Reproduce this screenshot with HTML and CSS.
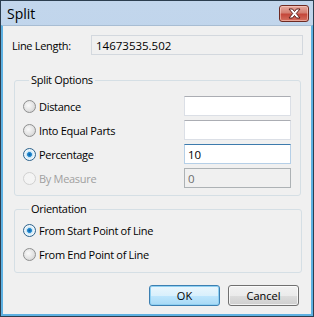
FILE: index.html
```html
<!DOCTYPE html>
<html lang="en">

<head>
    <meta charset="UTF-8">
    <title>Split</title>
    <link rel="stylesheet" href="styles.css">
</head>

<body>
    <div class="window">
        <div class="titlebar">
            <span class="title">Split</span>
            <button class="close-btn" type="button">
                <svg width="15" height="11" viewBox="0 0 15 11">
                    <path d="M2 1 L5.5 1 L7.5 3.5 L9.5 1 L13 1 L9.3 5.5 L13 10 L9.5 10 L7.5 7.5 L5.5 10 L2 10 L5.7 5.5 Z"
                        fill="#fff" stroke="#5a1f19" stroke-width="1" stroke-linejoin="round" />
                </svg>
            </button>
        </div>

        <div class="client">
            <div class="line-row">
                <span class="label">Line Length:</span>
                <div class="readonly-box">14673535.502</div>
            </div>

            <!-- Split Options -->
            <fieldset class="group split-options">
                <legend>Split Options</legend>
                <div class="opt-row">
                    <label class="radio"><span class="dot"></span>Distance</label>
                    <input type="text" class="field">
                </div>
                <div class="opt-row">
                    <label class="radio"><span class="dot"></span>Into Equal Parts</label>
                    <input type="text" class="field">
                </div>
                <div class="opt-row">
                    <label class="radio checked"><span class="dot"></span>Percentage</label>
                    <input type="text" class="field focused" value="10">
                </div>
                <div class="opt-row">
                    <label class="radio disabled"><span class="dot"></span>By Measure</label>
                    <input type="text" class="field disabled" value="0" disabled>
                </div>
            </fieldset>

            <!-- Orientation -->
            <fieldset class="group orientation">
                <legend>Orientation</legend>
                <div class="opt-row">
                    <label class="radio checked"><span class="dot"></span>From Start Point of Line</label>
                </div>
                <div class="opt-row">
                    <label class="radio"><span class="dot"></span>From End Point of Line</label>
                </div>
            </fieldset>

            <div class="buttons">
                <button type="button" class="btn default">OK</button>
                <button type="button" class="btn">Cancel</button>
            </div>
        </div>
    </div>
</body>

</html>
```
FILE: styles.css
```css
html,
body {
    margin: 0;
    padding: 0;
    background: #fff;
}

body {
    font-family: "Open Sans", "Liberation Sans", sans-serif;
    font-size: 11px;
    letter-spacing: -0.3px;
    color: #000;
}

.window {
    width: 314px;
    height: 317px;
    box-sizing: border-box;
    border: 1px solid #2c3e4f;
    background: linear-gradient(#c2d6ec, #b7cde7);
    display: flex;
    flex-direction: column;
}

.titlebar {
    height: 24px;
    display: flex;
    align-items: center;
    justify-content: space-between;
    padding: 0 4px 0 6px;
}

.title {
    font-size: 14px;
    letter-spacing: 0;
    color: #000;
}

.close-btn {
    width: 30px;
    height: 17px;
    margin-top: 1px;
    padding: 0;
    border: 1px solid #6e2a22;
    border-radius: 3px;
    background: linear-gradient(#e6a99e 0%, #d47f72 45%, #c4473a 55%, #d5705f 100%);
    box-shadow: inset 0 0 0 1px rgba(255, 220, 210, 0.5);
    display: flex;
    align-items: center;
    justify-content: center;
}

.client {
    flex: 1;
    background: #f0f0f0;
    border: 2px solid #5eb1e2;
    border-top: 1px solid #a8bdd3;
    padding: 9px 8px 0 9px;
    display: flex;
    flex-direction: column;
}

.line-row {
    display: flex;
    align-items: center;
    height: 20px;
}

.line-row .label {
    width: 79px;
}

.readonly-box {
    flex: 1;
    height: 20px;
    box-sizing: border-box;
    border: 1px solid #d3d8de;
    background: #f0f0f0;
    padding: 2px 4px;
    line-height: 15px;
    font-size: 11.5px;
    letter-spacing: 0;
}

.group {
    margin: 0;
    border: 1px solid #d5dfe5;
    border-radius: 3px;
    padding: 0 9px 7px 8px;
}

.group legend {
    padding: 0 2px;
    margin-left: 6px;
    line-height: 16px;
}

.split-options {
    margin: 17px 2px 0 2px;
}

.orientation {
    margin: 5px 1px 0 2px;
    padding-bottom: 8px;
}

.opt-row {
    height: 20px;
    display: flex;
    align-items: center;
    justify-content: space-between;
    margin-top: 4px;
}

.split-options .opt-row:first-of-type {
    margin-top: 8px;
}

.orientation .opt-row:first-of-type {
    margin-top: 3px;
}

.radio {
    display: flex;
    align-items: center;
    gap: 3px;
}

.radio .dot {
    width: 11px;
    height: 11px;
    border-radius: 50%;
    border: 1px solid #8e8f8f;
    background: radial-gradient(circle at 40% 40%, #fafafa 0%, #e2e2e2 55%, #c9c9c9 100%);
    box-sizing: content-box;
}

.radio.checked .dot {
    border-color: #2c628b;
    background: radial-gradient(circle, #0b5fa5 0%, #2a8fd4 28%, #bfe0f3 34%, #f2f8fc 60%, #cde4f2 100%);
}

.radio.disabled {
    color: #a0a0a0;
}

.radio.disabled .dot {
    border-color: #d0d0d0;
    background: #f4f4f4;
}

.field {
    width: 107px;
    height: 20px;
    box-sizing: border-box;
    margin: 0;
    border: 1px solid #dbdfe6;
    border-top-color: #abadb3;
    background: #fff;
    font: inherit;
    font-size: 11.5px;
    letter-spacing: 0;
    padding: 0 3px;
    color: #000;
}

.field.focused {
    border-color: #b5cfe7;
    border-top-color: #3d7bad;
}

.field.disabled {
    background: #f0f0f0;
    border-color: #adb2b5;
    color: #6d6d6d;
}

.buttons {
    display: flex;
    justify-content: flex-end;
    gap: 8px;
    margin-top: 12px;
    padding-right: 4px;
}

.btn {
    width: 71px;
    height: 21px;
    font: inherit;
    color: #000;
    border: 1px solid #707070;
    border-radius: 3px;
    background: linear-gradient(#f2f2f2 0%, #ebebeb 50%, #dddddd 51%, #cfcfcf 100%);
    box-shadow: inset 0 0 0 1px rgba(255, 255, 255, 0.7);
    padding: 0;
}

.btn.default {
    border-color: #3c7fb1;
    background: linear-gradient(#eaf6fd 0%, #d9f0fc 50%, #bee6fd 51%, #a7d9f5 100%);
    box-shadow: inset 0 0 0 1px #8fd0f2;
}
```
